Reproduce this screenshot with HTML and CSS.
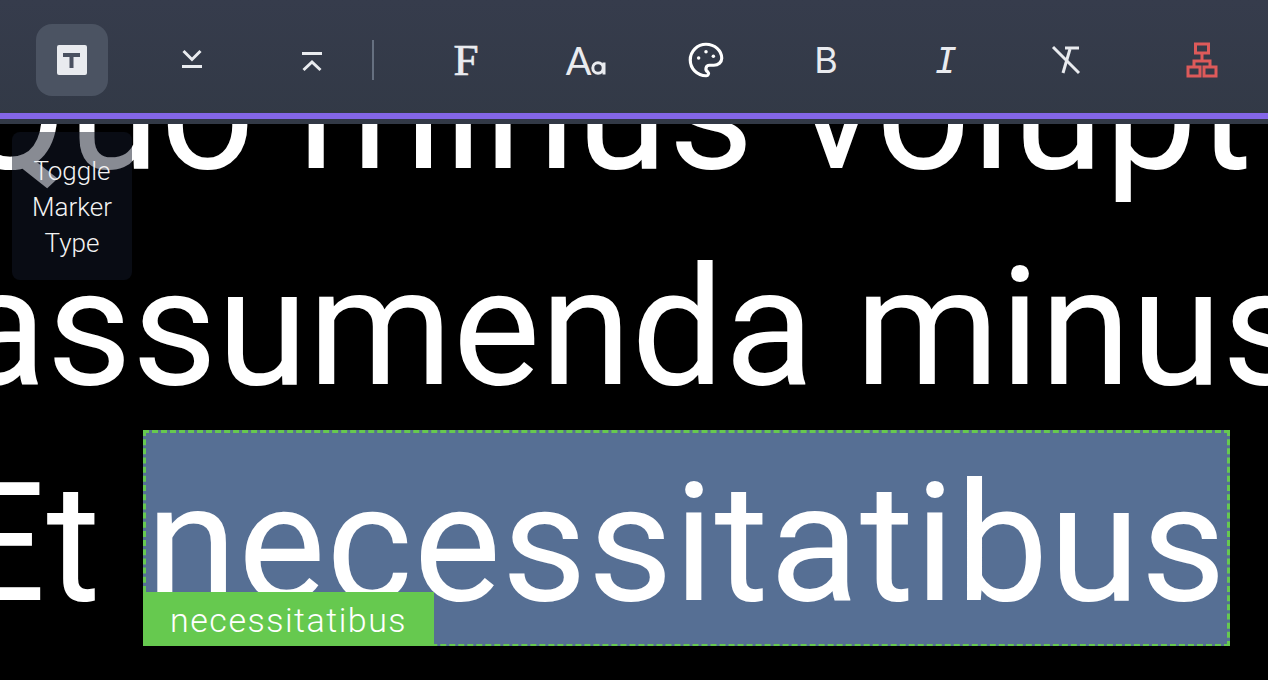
FILE: index.html
```html
<!DOCTYPE html>
<html lang="en">
<head>
    <meta charset="UTF-8">
    <title>Reader</title>
    <link rel="stylesheet" href="styles.css">
</head>
<body>
    <div class="toolbar">
        <div class="tools">
            <button class="tool active">
                <svg width="30" height="30" viewBox="0 0 30 30"><rect width="30" height="30" rx="2" fill="#e9ebef"/><path d="M6 8h17v4h-6.500v11h-4v-11h-6.500z" fill="#4a5160"/></svg>
            </button>
            <button class="tool">
                <svg width="24" height="24" viewBox="0 0 24 24"><path d="M3.500 3l8.500 8.500 8.500-8.500" class="line"/><path d="M2 18.500h20" class="line"/></svg>
            </button>
            <button class="tool">
                <svg width="24" height="24" viewBox="0 0 24 24"><path d="M3.500 22l8.500-8 8.500 8" class="line"/><path d="M2 5.500h20" class="line"/></svg>
            </button>
            <span class="divider"></span>
            <button class="tool glyph serif">F</button>
            <button class="tool glyph-size">
                <span class="big-a">A</span>
                <svg class="small-a" width="15" height="16" viewBox="0 0 15 16"><circle cx="7" cy="9" r="5.200" class="line"/><path d="M13 3.500v12" class="line"/></svg>
            </button>
            <button class="tool">
                <svg width="42" height="42" viewBox="0 0 24 24"><path d="M12 21a9 9 0 0 1 0-18c4.970 0 9 3.582 9 8c0 1.060-.474 2.078-1.318 2.828c-.844.750-1.989 1.172-3.182 1.172h-2.500a2 2 0 0 0-1 3.750a1.300 1.300 0 0 1-1 2.250" class="line thin"/><circle cx="7.800" cy="10.800" r="1" fill="#fff"/><circle cx="12" cy="7.300" r="1" fill="#fff"/><circle cx="16.200" cy="9.800" r="1" fill="#fff"/></svg>
            </button>
            <button class="tool glyph">B</button>
            <button class="tool glyph slanted">I</button>
            <button class="tool">
                <svg width="30" height="30" viewBox="0 0 30 30"><path d="M2 2l26 26" class="line"/><path d="M14 3h14" class="line"/><path d="M19 4l-7 24" class="line"/></svg>
            </button>
            <button class="tool last">
                <svg width="32" height="36" viewBox="0 0 32 36"><g class="red"><rect x="9.500" y="2" width="13" height="9"/><rect x="2" y="25" width="12" height="9"/><rect x="18" y="25" width="12" height="9"/><path d="M16 11v8M8 25v-6h16v6"/></g></svg>
            </button>
        </div>
        <div class="progress"></div>
    </div>

    <div class="tooltip">Toggle Marker Type</div>

    <div class="text">
        <div class="text-line first">Quo minus volupt</div>
        <div class="text-line second">assumenda minus</div>
        <div class="text-line third">Et <span class="marked">necessitatibus<span class="marked-label">necessitatibus</span></span></div>
    </div>
</body>
</html>
```

FILE: styles.css
```css
html, body { margin: 0; height: 100%; }
body { background-color: #000; color: #fff; font-family: "Roboto", sans-serif; overflow: hidden; }

.toolbar { position: absolute; top: 0; left: 0; right: 0; z-index: 2; background: linear-gradient(#363c4c, #323946); padding-bottom: 5px; }
.tools { display: flex; align-items: center; padding: 24px 0 17px 36px; }
.progress { height: 6px; background-color: #8466e8; }

.tool { width: 72px; height: 72px; margin-right: 48px; padding: 0; border: none; border-radius: 16px; background: none; color: #e9ebef; display: flex; align-items: center; justify-content: center; flex-shrink: 0; }
.tool.active { background-color: #4b5362; }
.tool.last { margin-left: 16px; margin-right: 0; }

.divider { width: 2px; height: 40px; background-color: #667080; margin: 0 56px 0 -24px; }

.line { fill: none; stroke: #e9ebef; stroke-width: 3; }
.line.thin { stroke: #fff; stroke-width: 1.800; }
.red { fill: none; stroke: #dd5a5a; stroke-width: 3; }

.glyph { font-family: "Inter", sans-serif; font-size: 36px; font-weight: 400; }
.glyph.serif { font-family: "Liberation Serif", serif; font-size: 45px; font-weight: 400; -webkit-text-stroke: 0.7px #e9ebef; }
.glyph.slanted { font-family: "DejaVu Sans Mono", monospace; font-style: italic; font-size: 36px; font-weight: 400; }
.glyph-size { font-family: "Lato", sans-serif; }
.big-a { font-size: 38px; }
.small-a { margin-top: 14px; }

.tooltip { position: absolute; top: 132px; left: 12px; z-index: 1; width: 120px; height: 148px; box-sizing: border-box; padding: 21px 4px; border-radius: 8px; background-color: rgba(17, 24, 39, 0.5); color: #f3f3f3; font-size: 26px; font-weight: 300; line-height: 36px; text-align: center; }

.text { font-size: 165px; line-height: 228px; white-space: nowrap; margin-top: -2px; overflow: hidden; }
.text-line { height: 216px; }
.text-line.first { margin-left: -46px; letter-spacing: 1px; }
.text-line.second { margin-left: -43px; }
.text-line.third { margin-left: -48px; letter-spacing: 0.800px; }

.marked { display: inline-block; position: relative; height: 217px; box-sizing: border-box; line-height: 222px; vertical-align: top; background-color: #566f94; border: 3px dashed #66c94f; }
.marked-label { position: absolute; left: -3px; bottom: -3px; width: 291px; height: 55px; background-color: #66c94f; font-size: 34px; font-weight: 300; line-height: 57px; letter-spacing: 1.500px; text-align: center; }
```
